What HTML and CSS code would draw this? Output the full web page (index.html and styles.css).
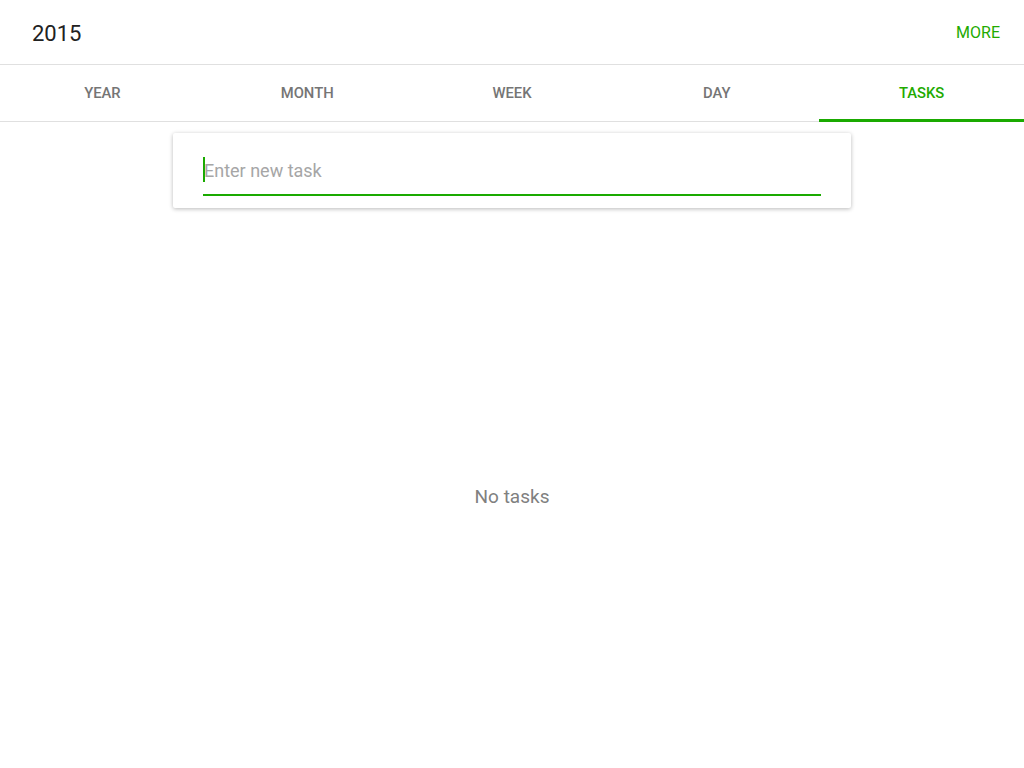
FILE: index.html
```html
<!DOCTYPE html>
<html>
<head>
<meta charset="utf-8">
<link rel="stylesheet" href="styles.css">
</head>
<body>
<header class="topbar">
  <div class="title">2015</div>
  <div class="more">MORE</div>
</header>
<nav class="tabs">
  <div class="tab">YEAR</div>
  <div class="tab">MONTH</div>
  <div class="tab">WEEK</div>
  <div class="tab">DAY</div>
  <div class="tab active">TASKS</div>
</nav>
<main class="content">
  <div class="card">
    <div class="field">
      <span class="caret"></span><span class="placeholder">Enter new task</span>
    </div>
  </div>
  <div class="empty">No tasks</div>
</main>
</body>
</html>
```

FILE: styles.css
```css
* { box-sizing: border-box; }
html, body { margin: 0; padding: 0; background: #fff; }
body {
  width: 1024px;
  height: 768px;
  font-family: Roboto, "Noto Sans", sans-serif;
  overflow: hidden;
  display: flex;
  flex-direction: column;
}
.topbar {
  height: 65px;
  border-bottom: 1px solid #e0e0e0;
  display: flex;
  align-items: center;
  justify-content: space-between;
  padding: 0 24px 0 32px;
}
.title {
  font-size: 22px;
  color: #212121;
  padding-top: 3px;
}
.more {
  font-size: 16px;
  font-weight: 400;
  color: #22aa00;
  padding-top: 1px;
}
.tabs {
  height: 57px;
  border-bottom: 1px solid #e0e0e0;
  display: grid;
  grid-template-columns: repeat(5, 1fr);
}
.tab {
  display: flex;
  align-items: center;
  justify-content: center;
  font-size: 14.8px;
  font-weight: 500;
  color: #757575;
  border-bottom: 3px solid transparent;
  padding-top: 1px;
  margin-bottom: -1px;
}
.tab.active {
  color: #22aa00;
  border-bottom-color: #1aaa00;
}
.content {
  flex: 1;
  display: flex;
  flex-direction: column;
  align-items: center;
  padding-top: 11px;
}
.card {
  width: 678px;
  height: 75px;
  background: #fff;
  box-shadow: 0 1px 4px rgba(0,0,0,0.28);
  border-radius: 2px;
  padding: 22px 30px 0 30px;
}
.field {
  height: 41px;
  border-bottom: 2px solid #1aaa00;
  display: flex;
  align-items: flex-start;
  font-size: 18px;
  line-height: 25px;
  color: #a6a6a6;
  padding-top: 2px;
}
.caret {
  display: inline-block;
  width: 2px;
  height: 25px;
  background: #1aaa00;
  margin-right: -1px;
}
.placeholder {
  padding-top: 1px;
}
.empty {
  margin-top: 276px;
  padding-top: 1px;
  font-size: 19px;
  color: #808080;
}
```
